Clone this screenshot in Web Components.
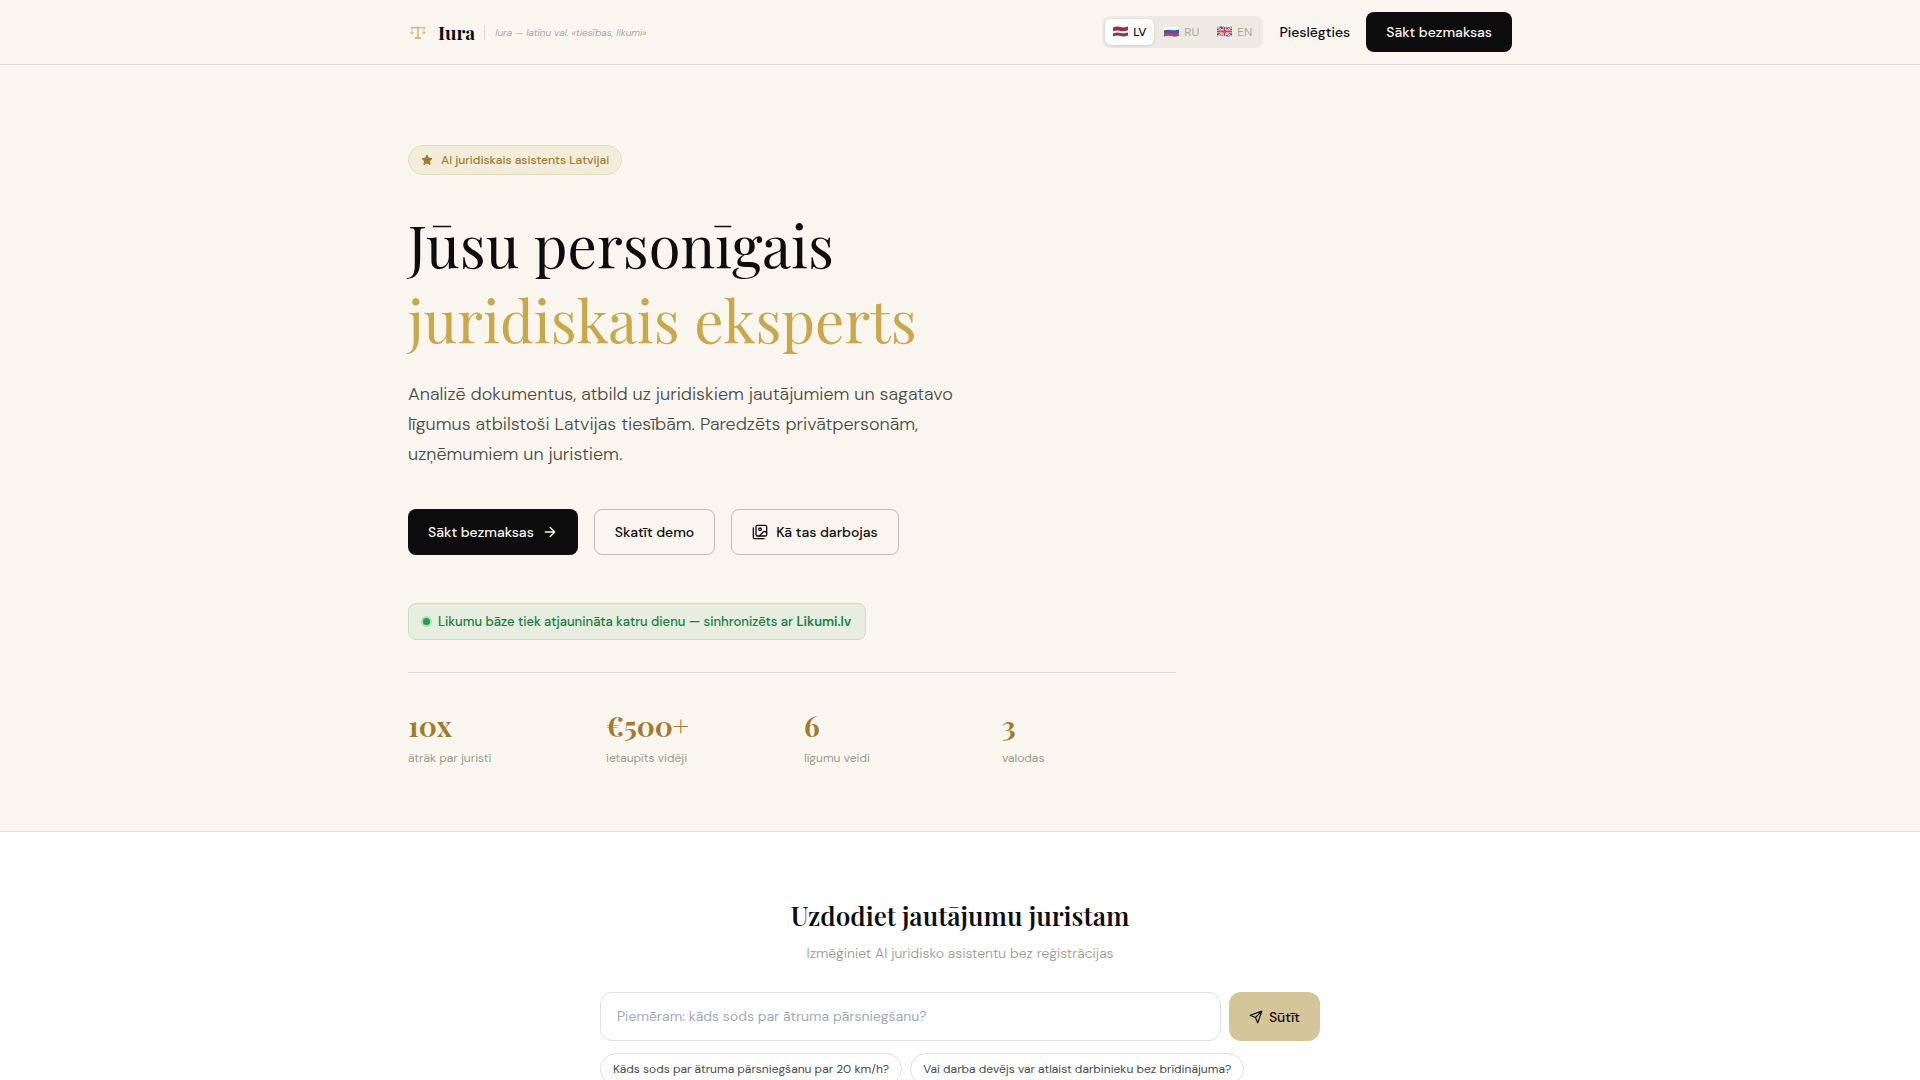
<!DOCTYPE html>
<html lang="lv">
<head>
<meta charset="utf-8">
<meta name="viewport" content="width=device-width, initial-scale=1">
<title>Iura</title>
<style>
  :root {
    --ink: #0d0d0d;
    --cream: #f9f6ef;
    --gold: #c9a84c;
    --gold-dark: #a07c2e;
    --muted: #9a9a8e;
    --body: #4a4a42;
    --line: #dddbd6;
    --serif: "Playfair Display", "Liberation Serif", serif;
    --sans: "DM Sans", Inter, sans-serif;
  }
  body {
    margin: 0;
    background: #fff;
    color: var(--ink);
    font: 14px/20px var(--sans);
  }
</style>
</head>
<body>
<iura-header>
  <iura-logo slot="logo" tagline="Iura — latīņu val. «tiesības, likumi»">Iura</iura-logo>
  <iura-languages slot="nav"></iura-languages>
  <iura-button slot="nav" variant="plain" href="#login">Pieslēgties</iura-button>
  <iura-button slot="nav" variant="dark" size="small" href="#start">Sākt bezmaksas</iura-button>
</iura-header>

<iura-hero>
  <iura-badge slot="badge">AI juridiskais asistents Latvijai</iura-badge>
  <span slot="title">Jūsu personīgais</span>
  <span slot="accent">juridiskais eksperts</span>
  <span slot="text">Analizē dokumentus, atbild uz juridiskiem jautājumiem un sagatavo līgumus atbilstoši Latvijas tiesībām. Paredzēts privātpersonām, uzņēmumiem un juristiem.</span>
  <iura-button slot="actions" variant="dark" href="#start">Sākt bezmaksas
    <svg slot="after" width="16" height="16" viewBox="0 0 24 24" fill="none" stroke="currentColor" stroke-width="2" stroke-linecap="round" stroke-linejoin="round"><path d="M5 12h14M12 5l7 7-7 7"/></svg>
  </iura-button>
  <iura-button slot="actions" variant="outline" href="#demo">Skatīt demo</iura-button>
  <iura-button slot="actions" variant="outline" href="#how">
    <svg slot="before" width="16" height="16" viewBox="0 0 24 24" fill="none" stroke="currentColor" stroke-width="2" stroke-linecap="round" stroke-linejoin="round"><rect x="6" y="2" width="16" height="16" rx="2"/><path d="M18 22H4a2 2 0 0 1-2-2V6"/><circle cx="12" cy="8" r="2"/><path d="m22 13-1.300-1.300a2.400 2.400 0 0 0-3.400 0L11 18"/></svg>
    Kā tas darbojas</iura-button>
  <iura-notice slot="notice">Likumu bāze tiek atjaunināta katru dienu — sinhronizēts ar <strong>Likumi.lv</strong></iura-notice>
  <iura-stat slot="stats" value="10x">ātrāk par juristi</iura-stat>
  <iura-stat slot="stats" value="€500+">ietaupīts vidēji</iura-stat>
  <iura-stat slot="stats" value="6">līgumu veidi</iura-stat>
  <iura-stat slot="stats" value="3">valodas</iura-stat>
</iura-hero>

<iura-ask placeholder="Piemēram: kāds sods par ātruma pārsniegšanu?">
  <span slot="title">Uzdodiet jautājumu juristam</span>
  <span slot="text">Izmēģiniet AI juridisko asistentu bez reģistrācijas</span>
  <iura-chip>Kāds sods par ātruma pārsniegšanu par 20 km/h?</iura-chip>
  <iura-chip>Vai darba devējs var atlaist darbinieku bez brīdinājuma?</iura-chip>
</iura-ask>

<script>
class IuraElement extends HTMLElement {
  constructor() {
    super();
    this.attachShadow({ mode: 'open' });
  }

  connectedCallback() {
    this.shadowRoot.innerHTML = this.render();
  }
}

class IuraHeader extends IuraElement {
  render() {
    return `
    <style>
      :host { display: block; background: var(--cream); border-bottom: 1px solid var(--line); }
      header {
        display: flex;
        align-items: center;
        justify-content: space-between;
        box-sizing: border-box;
        max-width: 1152px;
        min-height: 64px;
        margin: 0 auto;
        padding: 0 24px;
      }
      nav { display: flex; align-items: center; gap: 16px; }
    </style>
    <header>
      <slot name="logo"></slot>
      <nav><slot name="nav"></slot></nav>
    </header>`;
  }
}

class IuraLogo extends IuraElement {
  render() {
    return `
    <style>
      :host { display: flex; align-items: center; }
      a { display: flex; align-items: center; gap: 10px; color: inherit; text-decoration: none; }
      svg { display: block; }
      .name { font: 700 19px/28px var(--serif); }
      .tagline {
        margin-left: 9px;
        padding-left: 10px;
        border-left: 1px solid var(--line);
        color: var(--muted);
        font-size: 10px;
        font-style: italic;
        font-weight: 300;
        line-height: 15px;
      }
    </style>
    <a href="#top">
      <svg width="20" height="20" viewBox="0 0 20 20" fill="none" stroke="#c9a84c" stroke-opacity=".7">
        <path d="M2.600 5.700h14.800" stroke-width="1.600"/>
        <path d="M10 4.800v11" stroke-width="1.800"/>
        <path d="M7 16h6" stroke-width="2"/>
        <path d="M4 6.500v4M16 6.500v4" stroke-width="1.200" stroke-opacity=".5"/>
        <path d="M2 10.300h4c-.3 2-3.700 2-4 0zM14 10.300h4c-.3 2-3.700 2-4 0z" fill="#c9a84c" fill-opacity=".8" stroke="none"/>
      </svg>
      <span class="name"><slot></slot></span>
    </a>
    <span class="tagline">${this.getAttribute('tagline')}</span>`;
  }
}

const WAVE = 'M0 1.500Q3.500 0 7.500 1T15 .6V9.400Q11.500 11 7.500 10T0 10.500z';

const FLAGS = {
  LV: `<rect width="15" height="12" fill="#9d2f3c"/><path d="M0 5.200Q3.500 4.200 7.500 4.900T15 4.300v2.200q-3.500 1.200-7.500.4T0 7.400z" fill="#fff"/>`,
  RU: `<rect width="15" height="12" fill="#fff"/><path d="M0 4.300Q3.500 3.300 7.500 4T15 3.500V12H0z" fill="#1b50b8"/><path d="M0 7.400Q3.500 6.400 7.500 7.100T15 6.500V12H0z" fill="#d8232f"/>`,
  EN: `<rect width="15" height="12" fill="#1d3f94"/><path d="M0 1l15 10M15 1L0 11" stroke="#fff" stroke-width="2"/><path d="M0 1l15 10M15 1L0 11" stroke="#d22b3b" stroke-width=".8"/><path d="M7.500 0v12M0 5.600h15" stroke="#fff" stroke-width="3.400"/><path d="M7.500 0v12M0 5.600h15" stroke="#d22b3b" stroke-width="2"/>`
};

class IuraLanguages extends IuraElement {
  connectedCallback() {
    super.connectedCallback();
    this.shadowRoot.querySelectorAll('button').forEach((button) => {
      button.addEventListener('click', () => this.select(button));
    });
  }

  select(active) {
    this.shadowRoot.querySelectorAll('button').forEach((button) => {
      button.setAttribute('aria-pressed', button === active);
    });
  }

  render() {
    const buttons = Object.keys(FLAGS).map((code) => `
      <button type="button" aria-pressed="${code === 'LV'}">
        <svg width="16" height="12" viewBox="0 0 16 12" aria-hidden="true">
          <clipPath id="wave-${code}"><path d="${WAVE}"/></clipPath>
          <g clip-path="url(#wave-${code})">${FLAGS[code]}</g>
        </svg>${code}
      </button>`).join('');
    return `
    <style>
      :host { display: flex; gap: 2px; padding: 3px; border-radius: 8px; background: #edeae3; }
      button {
        display: flex;
        align-items: center;
        gap: 4px;
        padding: 4px 8px;
        border: 0;
        border-radius: 6px;
        background: none;
        color: #a9a79f;
        font: 400 12px/18px var(--sans);
        cursor: pointer;
      }
      button[aria-pressed="true"] {
        background: #fff;
        color: var(--ink);
        font-weight: 500;
        box-shadow: 0 1px 3px #0000001f;
      }
      button[aria-pressed="false"] svg { opacity: .9; }
    </style>
    ${buttons}`;
  }
}

class IuraButton extends IuraElement {
  render() {
    return `
    <style>
      :host { display: block; }
      a {
        display: flex;
        align-items: center;
        gap: 8px;
        padding: 13px 20px;
        border-radius: 8px;
        color: var(--ink);
        font-weight: 500;
        text-decoration: none;
        white-space: nowrap;
      }
      :host([variant="dark"]) a { background: var(--ink); color: var(--cream); }
      :host([variant="outline"]) a { padding: 12px 20px; border: 1px solid #bfbdb8; }
      :host([variant="plain"]) a { padding: 0; }
      :host([size="small"]) a { padding: 10px 20px; }
      ::slotted(svg) { display: block; }
    </style>
    <a href="${this.getAttribute('href')}"><slot name="before"></slot><span><slot></slot></span><slot name="after"></slot></a>`;
  }
}

class IuraBadge extends IuraElement {
  render() {
    return `
    <style>
      :host {
        display: inline-flex;
        align-items: center;
        gap: 8px;
        padding: 5px 12px;
        border: 1px solid #e8dcb5;
        border-radius: 999px;
        background: #f2ecda;
        color: var(--gold-dark);
        font-size: 12px;
        font-weight: 500;
        line-height: 18px;
      }
    </style>
    <svg width="12" height="12" viewBox="0 0 24 24" fill="currentColor" stroke="currentColor" stroke-width="2" stroke-linejoin="round" aria-hidden="true"><path d="M12 2l3.100 6.300 6.900 1-5 4.900 1.200 6.800L12 17.800 5.800 21 7 14.200 2 9.300l6.900-1z"/></svg>
    <slot></slot>`;
  }
}

class IuraNotice extends IuraElement {
  render() {
    return `
    <style>
      :host {
        display: inline-flex;
        align-items: center;
        gap: 8px;
        padding: 8px 14px;
        border: 1px solid #bfe2c8;
        border-radius: 8px;
        background: #e7eee0;
        color: #15803d;
        font-size: 13px;
        font-weight: 500;
        line-height: 19px;
      }
      i { width: 7px; height: 7px; border-radius: 50%; background: #16a34a; box-shadow: 0 0 0 2px #16a34a40; }
      ::slotted(strong) { font-weight: 600; }
    </style>
    <i></i><span><slot></slot></span>`;
  }
}

class IuraStat extends IuraElement {
  render() {
    return `
    <style>
      :host { display: block; }
      .value { color: var(--gold-dark); font: 700 28px/42px var(--serif); }
      .label { margin-top: 2px; color: var(--muted); font-size: 12px; line-height: 18px; }
    </style>
    <div class="value">${this.getAttribute('value')}</div>
    <div class="label"><slot></slot></div>`;
  }
}

class IuraHero extends IuraElement {
  render() {
    return `
    <style>
      :host { display: block; background: var(--cream); border-bottom: 1px solid #e2e1dc; }
      section { box-sizing: border-box; max-width: 1152px; margin: 0 auto; padding: 80px 24px 64px; }
      .content { max-width: 768px; }
      .badge, .notice { display: flex; }
      h1 { margin: 32px 0 22px; font: 400 58px/75px var(--serif); }
      h1 slot { display: block; }
      h1 .accent { color: var(--gold); }
      p { max-width: 560px; margin: 0; color: var(--body); font-size: 18px; font-weight: 300; line-height: 30px; }
      .actions { display: flex; flex-wrap: wrap; gap: 16px; margin: 40px 0 48px; }
      .stats {
        display: grid;
        grid-template-columns: repeat(4, 1fr);
        gap: 24px;
        margin-top: 32px;
        padding-top: 32px;
        border-top: 1px solid var(--line);
      }
    </style>
    <section>
      <div class="content">
        <div class="badge"><slot name="badge"></slot></div>
        <h1><slot name="title"></slot><slot name="accent" class="accent"></slot></h1>
        <p><slot name="text"></slot></p>
        <div class="actions"><slot name="actions"></slot></div>
        <div class="notice"><slot name="notice"></slot></div>
        <div class="stats"><slot name="stats"></slot></div>
      </div>
    </section>`;
  }
}

class IuraChip extends IuraElement {
  render() {
    return `
    <style>
      :host { display: block; }
      button {
        padding: 6px 12px;
        border: 1px solid #dfdfdd;
        border-radius: 999px;
        background: #fff;
        color: var(--body);
        font: 400 12px/18px var(--sans);
        cursor: pointer;
      }
    </style>
    <button type="button"><slot></slot></button>`;
  }
}

class IuraAsk extends IuraElement {
  connectedCallback() {
    super.connectedCallback();
    const input = this.shadowRoot.querySelector('input');
    this.shadowRoot.querySelector('form').addEventListener('submit', (event) => event.preventDefault());
    // a chip fills the question in
    this.querySelectorAll('iura-chip').forEach((chip) => {
      chip.addEventListener('click', () => {
        input.value = chip.textContent;
        input.focus();
      });
    });
  }

  render() {
    return `
    <style>
      :host { display: block; background: #fff; }
      section { box-sizing: border-box; max-width: 768px; margin: 0 auto; padding: 64px 24px; }
      h2 { margin: 0 0 7px; font: 600 26px/40px var(--serif); text-align: center; }
      p { margin: 0 0 29px; color: var(--muted); font-weight: 300; text-align: center; }
      form { display: flex; gap: 8px; }
      input {
        flex: 1;
        min-width: 0;
        padding: 14px 16px;
        border: 1px solid #dfdfdd;
        border-radius: 12px;
        background: #fff;
        color: var(--ink);
        font: inherit;
        line-height: 19px;
      }
      input::placeholder { color: #a3a9b8; opacity: 1; }
      form button {
        display: flex;
        align-items: center;
        gap: 6px;
        padding: 0 20px;
        border: 0;
        border-radius: 12px;
        background: #d4c699;
        color: var(--ink);
        font: inherit;
        font-weight: 500;
        cursor: pointer;
      }
      .chips { display: flex; flex-wrap: wrap; gap: 8px; margin-top: 12px; }
    </style>
    <section>
      <h2><slot name="title"></slot></h2>
      <p><slot name="text"></slot></p>
      <form>
        <input type="text" aria-label="Jautājums" placeholder="${this.getAttribute('placeholder')}">
        <button type="submit">
          <svg width="14" height="14" viewBox="0 0 24 24" fill="none" stroke="currentColor" stroke-width="2" stroke-linecap="round" stroke-linejoin="round" aria-hidden="true"><path d="M22 2L15 22l-4-9-9-4zM22 2L11 13"/></svg>
          Sūtīt
        </button>
      </form>
      <div class="chips"><slot></slot></div>
    </section>`;
  }
}

customElements.define('iura-header', IuraHeader);
customElements.define('iura-logo', IuraLogo);
customElements.define('iura-languages', IuraLanguages);
customElements.define('iura-button', IuraButton);
customElements.define('iura-badge', IuraBadge);
customElements.define('iura-notice', IuraNotice);
customElements.define('iura-stat', IuraStat);
customElements.define('iura-hero', IuraHero);
customElements.define('iura-chip', IuraChip);
customElements.define('iura-ask', IuraAsk);
</script>
</body>
</html>
